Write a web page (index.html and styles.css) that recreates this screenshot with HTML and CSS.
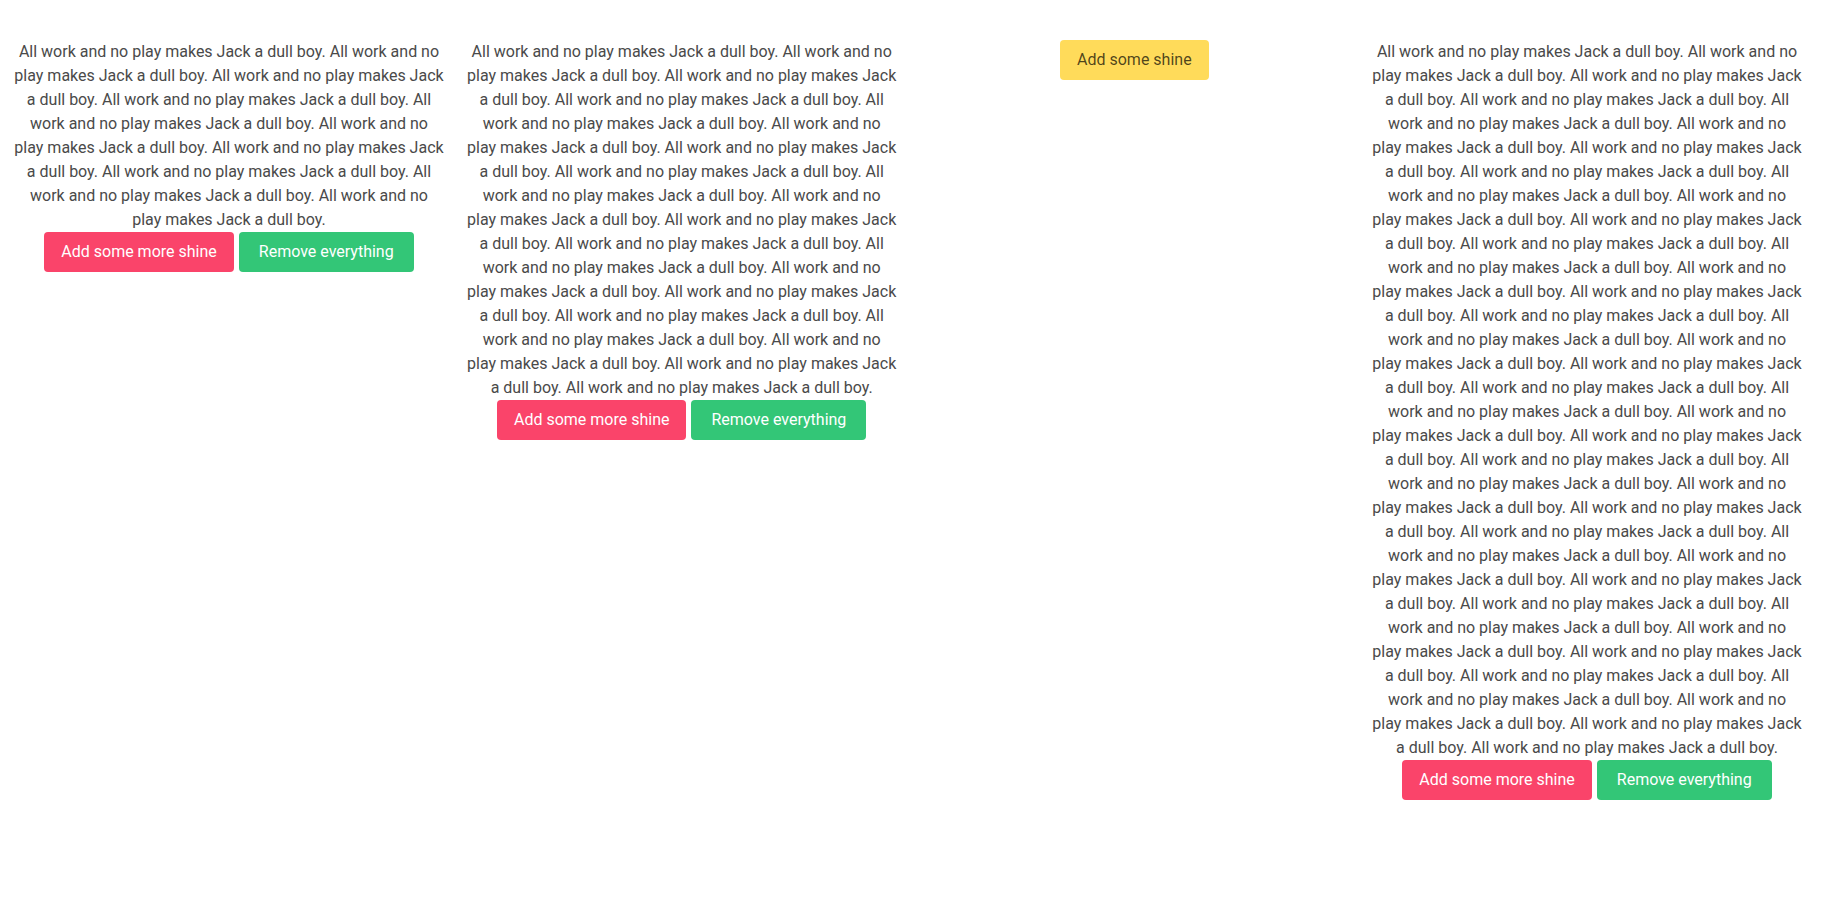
FILE: index.html
```html
<!DOCTYPE html>
<html lang="en">
<head>
<meta charset="utf-8">
<title>Shine</title>
<link rel="stylesheet" href="styles.css">
</head>
<body>
<div class="columns">
  <div class="column">
    <p class="text">
      All work and no play makes Jack a dull boy. All work and no play makes Jack a dull boy. All work and no play makes Jack a dull boy. All work and no play makes Jack a dull boy. All work and no play makes Jack a dull boy.
      All work and no play makes Jack a dull boy. All work and no play makes Jack a dull boy. All work and no play makes Jack a dull boy. All work and no play makes Jack a dull boy. All work and no play makes Jack a dull boy.
    </p>
    <div class="buttons">
      <button class="button is-danger">Add some more shine</button>
      <button class="button is-success">Remove everything</button>
    </div>
  </div>
  <div class="column">
    <p class="text">
      All work and no play makes Jack a dull boy. All work and no play makes Jack a dull boy. All work and no play makes Jack a dull boy. All work and no play makes Jack a dull boy. All work and no play makes Jack a dull boy.
      All work and no play makes Jack a dull boy. All work and no play makes Jack a dull boy. All work and no play makes Jack a dull boy. All work and no play makes Jack a dull boy. All work and no play makes Jack a dull boy.
      All work and no play makes Jack a dull boy. All work and no play makes Jack a dull boy. All work and no play makes Jack a dull boy. All work and no play makes Jack a dull boy. All work and no play makes Jack a dull boy.
      All work and no play makes Jack a dull boy. All work and no play makes Jack a dull boy. All work and no play makes Jack a dull boy. All work and no play makes Jack a dull boy. All work and no play makes Jack a dull boy.
    </p>
    <div class="buttons">
      <button class="button is-danger">Add some more shine</button>
      <button class="button is-success">Remove everything</button>
    </div>
  </div>
  <div class="column">
    <div class="buttons">
      <button class="button is-warning">Add some shine</button>
    </div>
  </div>
  <div class="column">
    <p class="text">
      All work and no play makes Jack a dull boy. All work and no play makes Jack a dull boy. All work and no play makes Jack a dull boy. All work and no play makes Jack a dull boy. All work and no play makes Jack a dull boy.
      All work and no play makes Jack a dull boy. All work and no play makes Jack a dull boy. All work and no play makes Jack a dull boy. All work and no play makes Jack a dull boy. All work and no play makes Jack a dull boy.
      All work and no play makes Jack a dull boy. All work and no play makes Jack a dull boy. All work and no play makes Jack a dull boy. All work and no play makes Jack a dull boy. All work and no play makes Jack a dull boy.
      All work and no play makes Jack a dull boy. All work and no play makes Jack a dull boy. All work and no play makes Jack a dull boy. All work and no play makes Jack a dull boy. All work and no play makes Jack a dull boy.
      All work and no play makes Jack a dull boy. All work and no play makes Jack a dull boy. All work and no play makes Jack a dull boy. All work and no play makes Jack a dull boy. All work and no play makes Jack a dull boy.
      All work and no play makes Jack a dull boy. All work and no play makes Jack a dull boy. All work and no play makes Jack a dull boy. All work and no play makes Jack a dull boy. All work and no play makes Jack a dull boy.
      All work and no play makes Jack a dull boy. All work and no play makes Jack a dull boy. All work and no play makes Jack a dull boy. All work and no play makes Jack a dull boy. All work and no play makes Jack a dull boy.
      All work and no play makes Jack a dull boy. All work and no play makes Jack a dull boy. All work and no play makes Jack a dull boy. All work and no play makes Jack a dull boy. All work and no play makes Jack a dull boy.
    </p>
    <div class="buttons">
      <button class="button is-danger">Add some more shine</button>
      <button class="button is-success">Remove everything</button>
    </div>
  </div>
</div>
</body>
</html>
```
FILE: styles.css
```css
html, body {
  margin: 0;
  background: #fff;
}
body {
  font-family: Roboto, "Liberation Sans", sans-serif;
  font-size: 16px;
  line-height: 24px;
  color: #4a4a4a;
}
.columns {
  display: grid;
  grid-template-columns: repeat(4, 1fr);
  align-items: start;
  padding: 40px 10.67px 0 2.67px;
}
.column {
  padding: 0 11px;
  min-width: 0;
  text-align: center;
}
.text {
  margin: 0;
}
.buttons {
  display: flex;
  justify-content: center;
  gap: 5px;
}
.button {
  box-sizing: border-box;
  height: 40px;
  padding: 0 17px;
  border: 0;
  border-radius: 4px;
  font-family: inherit;
  font-size: 16px;
  line-height: 24px;
  color: #fff;
  cursor: pointer;
  white-space: nowrap;
}
.is-danger {
  background: #fa446a;
}
.is-success {
  background: #33c677;
  padding: 0 20px;
}
.is-warning {
  background: #ffdb5a;
  color: rgba(0, 0, 0, 0.7);
}
```
